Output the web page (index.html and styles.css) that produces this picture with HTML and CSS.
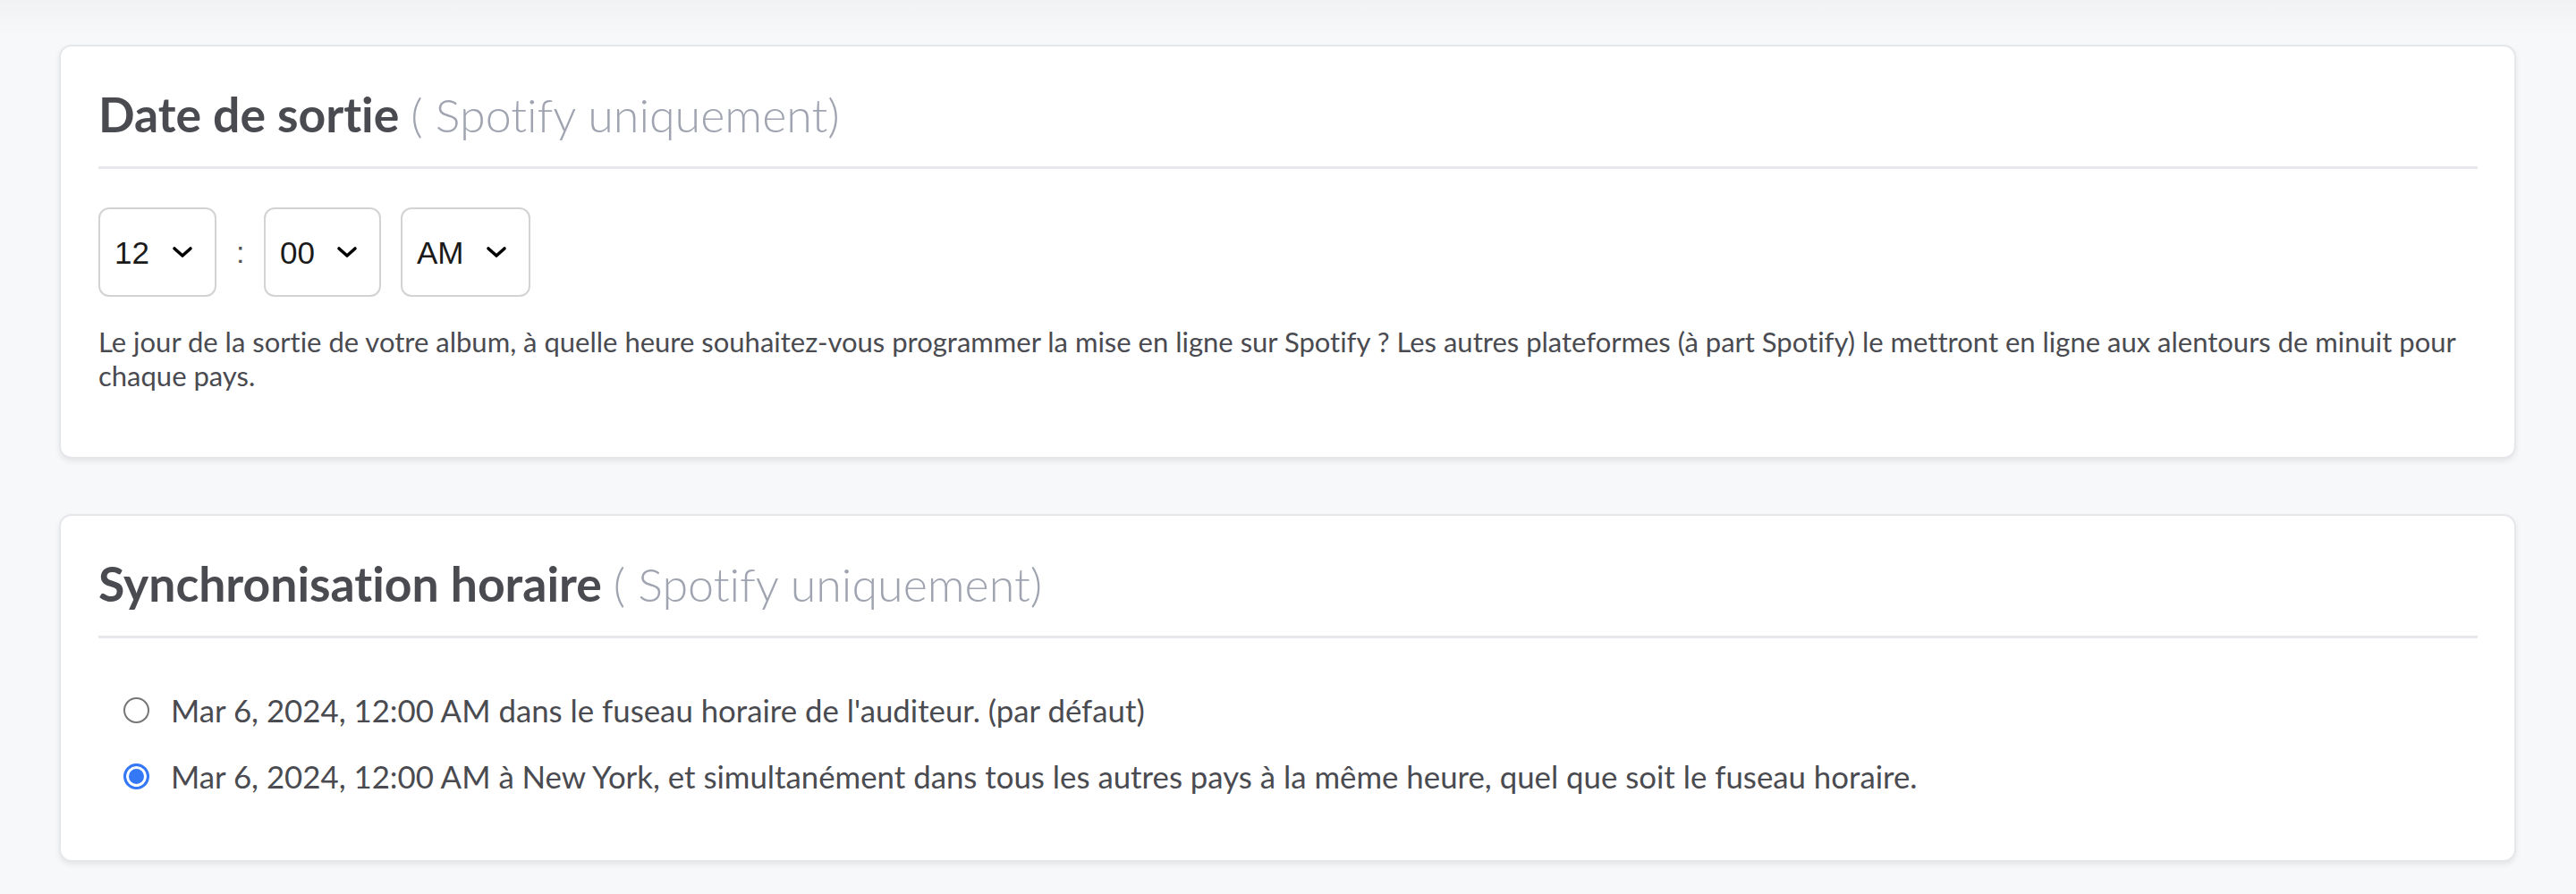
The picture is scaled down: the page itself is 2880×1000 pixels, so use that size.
FILE: index.html
```html
<!DOCTYPE html>
<html lang="fr">
<head>
<meta charset="utf-8">
<title>Date de sortie</title>
<link rel="stylesheet" href="styles.css">
</head>
<body>
<main class="page">
  <section class="card">
    <h2 class="card-title">Date de sortie <span class="card-sub">( Spotify uniquement)</span></h2>
    <div class="time-row">
      <div class="select-wrap">
        <select class="time-select sel-hour"><option>12</option></select>
        <svg class="chev" viewBox="0 0 24 14" aria-hidden="true"><path d="M3 3 L12 11 L21 3"/></svg>
      </div>
      <span class="colon">:</span>
      <div class="select-wrap">
        <select class="time-select sel-min"><option>00</option></select>
        <svg class="chev" viewBox="0 0 24 14" aria-hidden="true"><path d="M3 3 L12 11 L21 3"/></svg>
      </div>
      <div class="select-wrap">
        <select class="time-select sel-ampm"><option>AM</option></select>
        <svg class="chev" viewBox="0 0 24 14" aria-hidden="true"><path d="M3 3 L12 11 L21 3"/></svg>
      </div>
    </div>
    <p class="help">Le jour de la sortie de votre album, à quelle heure souhaitez-vous programmer la mise en ligne sur Spotify ? Les autres plateformes (à part Spotify) le mettront en ligne aux alentours de minuit pour chaque pays.</p>
  </section>

  <section class="card">
    <h2 class="card-title">Synchronisation horaire <span class="card-sub">( Spotify uniquement)</span></h2>
    <div class="radio-list">
      <label class="radio-row">
        <input type="radio" name="sync" class="radio">
        <span>Mar 6, 2024, 12:00 AM dans le fuseau horaire de l'auditeur. (par défaut)</span>
      </label>
      <label class="radio-row">
        <input type="radio" name="sync" class="radio" checked>
        <span>Mar 6, 2024, 12:00 AM à New York, et simultanément dans tous les autres pays à la même heure, quel que soit le fuseau horaire.</span>
      </label>
    </div>
  </section>
</main>
</body>
</html>
```

FILE: styles.css
```css
* { box-sizing: border-box; }

html, body {
  margin: 0;
  padding: 0;
}

body {
  background: linear-gradient(#f1f2f4 0px, #f7f8fa 40px, #f7f8fa 100%);
  font-family: Lato, "Open Sans", sans-serif;
  font-variant-ligatures: no-common-ligatures;
  color: #4a4b51;
  min-height: 1000px;
}

.page {
  padding: 50px 67px 0 66px;
  display: flex;
  flex-direction: column;
  gap: 62px;
}

.card {
  background: #ffffff;
  border: 2px solid #e6e7ea;
  border-radius: 14px;
  box-shadow: 0 3px 6px rgba(0, 0, 0, 0.08);
  padding: 44px 41px 72px 42px;
}

.card-title {
  margin: 0;
  font-size: 53.5px;
  line-height: 62px;
  font-weight: 700;
  color: #4a4b51;
  padding-bottom: 27px;
  border-bottom: 3px solid #e7e8ec;
}

.card-sub {
  font-weight: 300;
  color: #9fa4b0;
  font-size: 52px;
}

.time-row {
  margin-top: 43px;
  display: flex;
  align-items: center;
  gap: 22px;
}

.select-wrap {
  position: relative;
  display: flex;
}

.time-select {
  -webkit-appearance: none;
  appearance: none;
  height: 100px;
  border: 2px solid #d3d3d3;
  border-radius: 12px;
  background: #ffffff;
  font-family: "Liberation Sans", Arial, sans-serif;
  font-size: 35px;
  color: #1a1a1a;
  padding: 0 0 0 16px;
  margin: 0;
  outline: none;
}

.sel-hour { width: 132px; }
.sel-min { width: 131px; }
.sel-ampm { width: 145px; }

.chev {
  position: absolute;
  right: 26px;
  top: 50%;
  width: 24px;
  height: 14px;
  margin-top: -7px;
  pointer-events: none;
}

.chev path {
  fill: none;
  stroke: #000;
  stroke-width: 3.6;
  stroke-linecap: round;
  stroke-linejoin: round;
}

.colon {
  font-family: "Liberation Sans", Arial, sans-serif;
  font-size: 34px;
  color: #555;
  width: 9px;
  text-align: center;
}

.help {
  margin: 31px 0 0 0;
  font-size: 31px;
  line-height: 38px;
  color: #4a4b51;
}

.radio-list {
  margin-top: 58px;
  padding-left: 28px;
  display: flex;
  flex-direction: column;
  gap: 30px;
}

.radio-row {
  display: flex;
  align-items: center;
  gap: 24px;
  height: 44px;
  font-size: 34.8px;
  color: #4a4b51;
}

.radio {
  -webkit-appearance: none;
  appearance: none;
  margin: 0;
  width: 29px;
  height: 29px;
  border-radius: 50%;
  border: 2px solid #767676;
  background: #fff;
  flex: none;
}

.radio:checked {
  border: 3px solid #3478f6;
  background: #3478f6;
  box-shadow: inset 0 0 0 3px #ffffff;
}
```
